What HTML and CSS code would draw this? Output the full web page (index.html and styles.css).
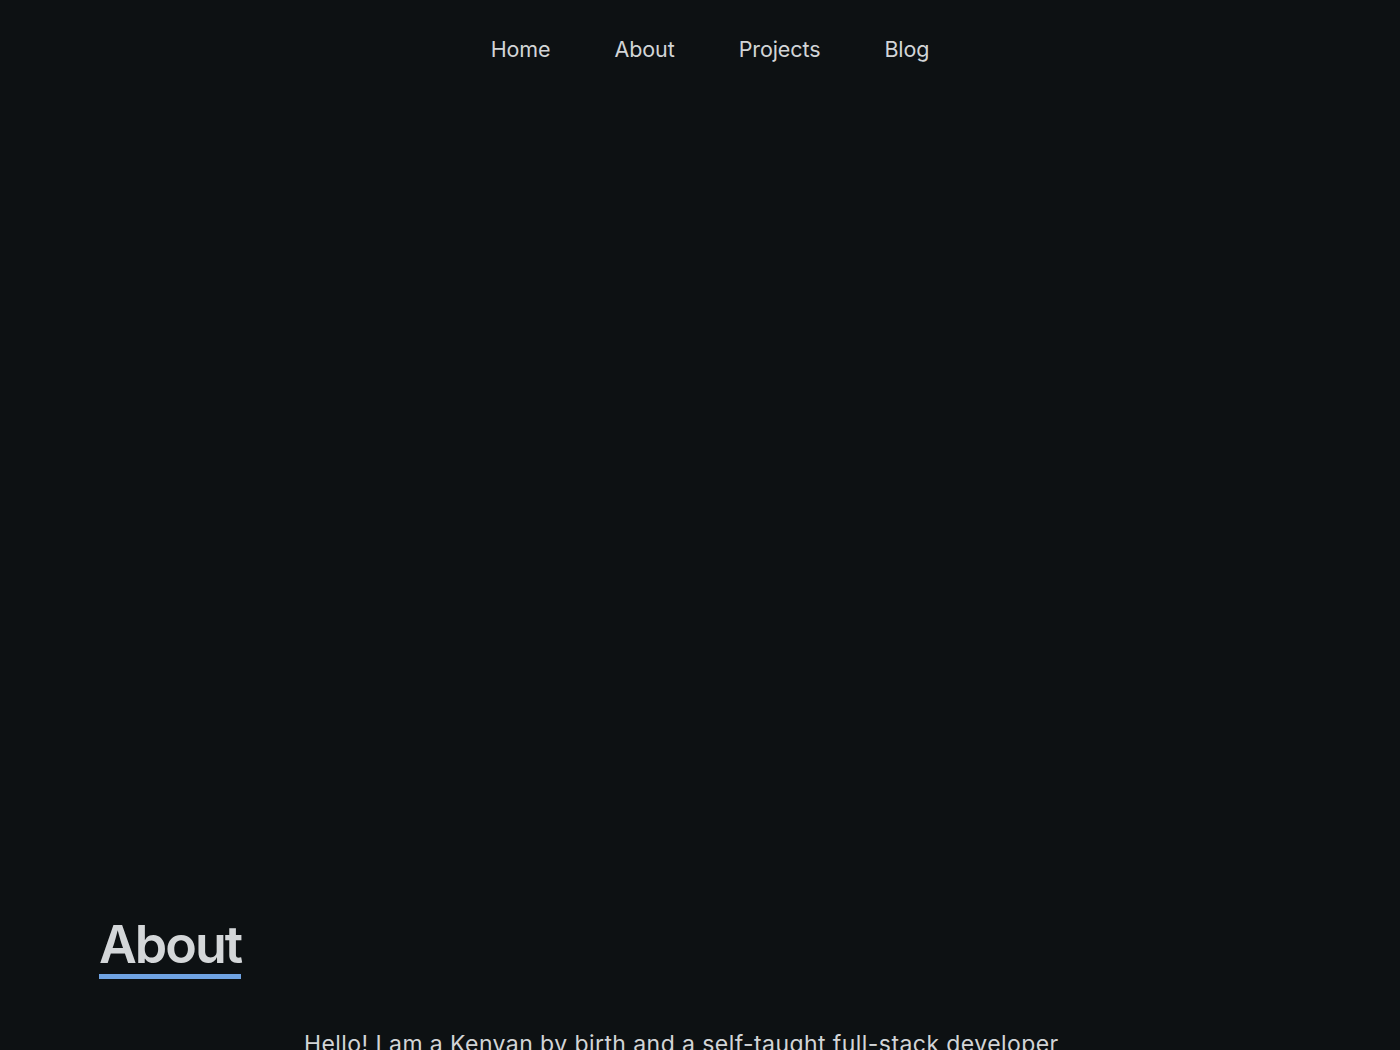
FILE: index.html
```html
<!DOCTYPE html>
<html lang="en">
<head>
<meta charset="utf-8">
<title>Portfolio</title>
<link rel="stylesheet" href="styles.css">
</head>
<body>
  <header class="nav">
    <a class="nav-link" href="#">Home</a>
    <a class="nav-link" href="#">About</a>
    <a class="nav-link" href="#">Projects</a>
    <a class="nav-link" href="#">Blog</a>
  </header>
  <section class="hero"></section>
  <section class="about">
    <h2 class="section-title">About</h2>
    <div class="about-body">
      <p class="about-text">Hello! I am a Kenyan by birth and a self-taught full-stack developer with a passion for building things for the web.</p>
    </div>
  </section>
</body>
</html>
```
FILE: styles.css
```css
html, body {
  margin: 0;
  padding: 0;
  background: #0d1113;
  color: #d2d5d7;
  font-family: Inter, "Noto Sans", sans-serif;
}
.nav {
  display: flex;
  justify-content: center;
  gap: 64px;
  padding-top: 35px;
  height: 65px;
  padding-left: 20px;
}
.nav-link {
  color: #d2d5d7;
  text-decoration: none;
  font-size: 21.5px;
  line-height: 28px;
  letter-spacing: -0.1px;
}
.hero {
  height: 817px;
}
.about {
  padding-left: 99px;
}
.section-title {
  display: inline-block;
  margin: 0;
  font-size: 52px;
  font-weight: 600;
  letter-spacing: -2px;
  line-height: 56px;
  color: #d4d7d9;
  border-bottom: 5px solid #6fa3e3;
  padding-bottom: 1px;
}
.about-body {
  padding-left: 205px;
  padding-top: 48px;
}
.about-text {
  margin: 0;
  font-size: 23px;
  line-height: 34px;
  letter-spacing: 0.43px;
  max-width: 775px;
}
```
